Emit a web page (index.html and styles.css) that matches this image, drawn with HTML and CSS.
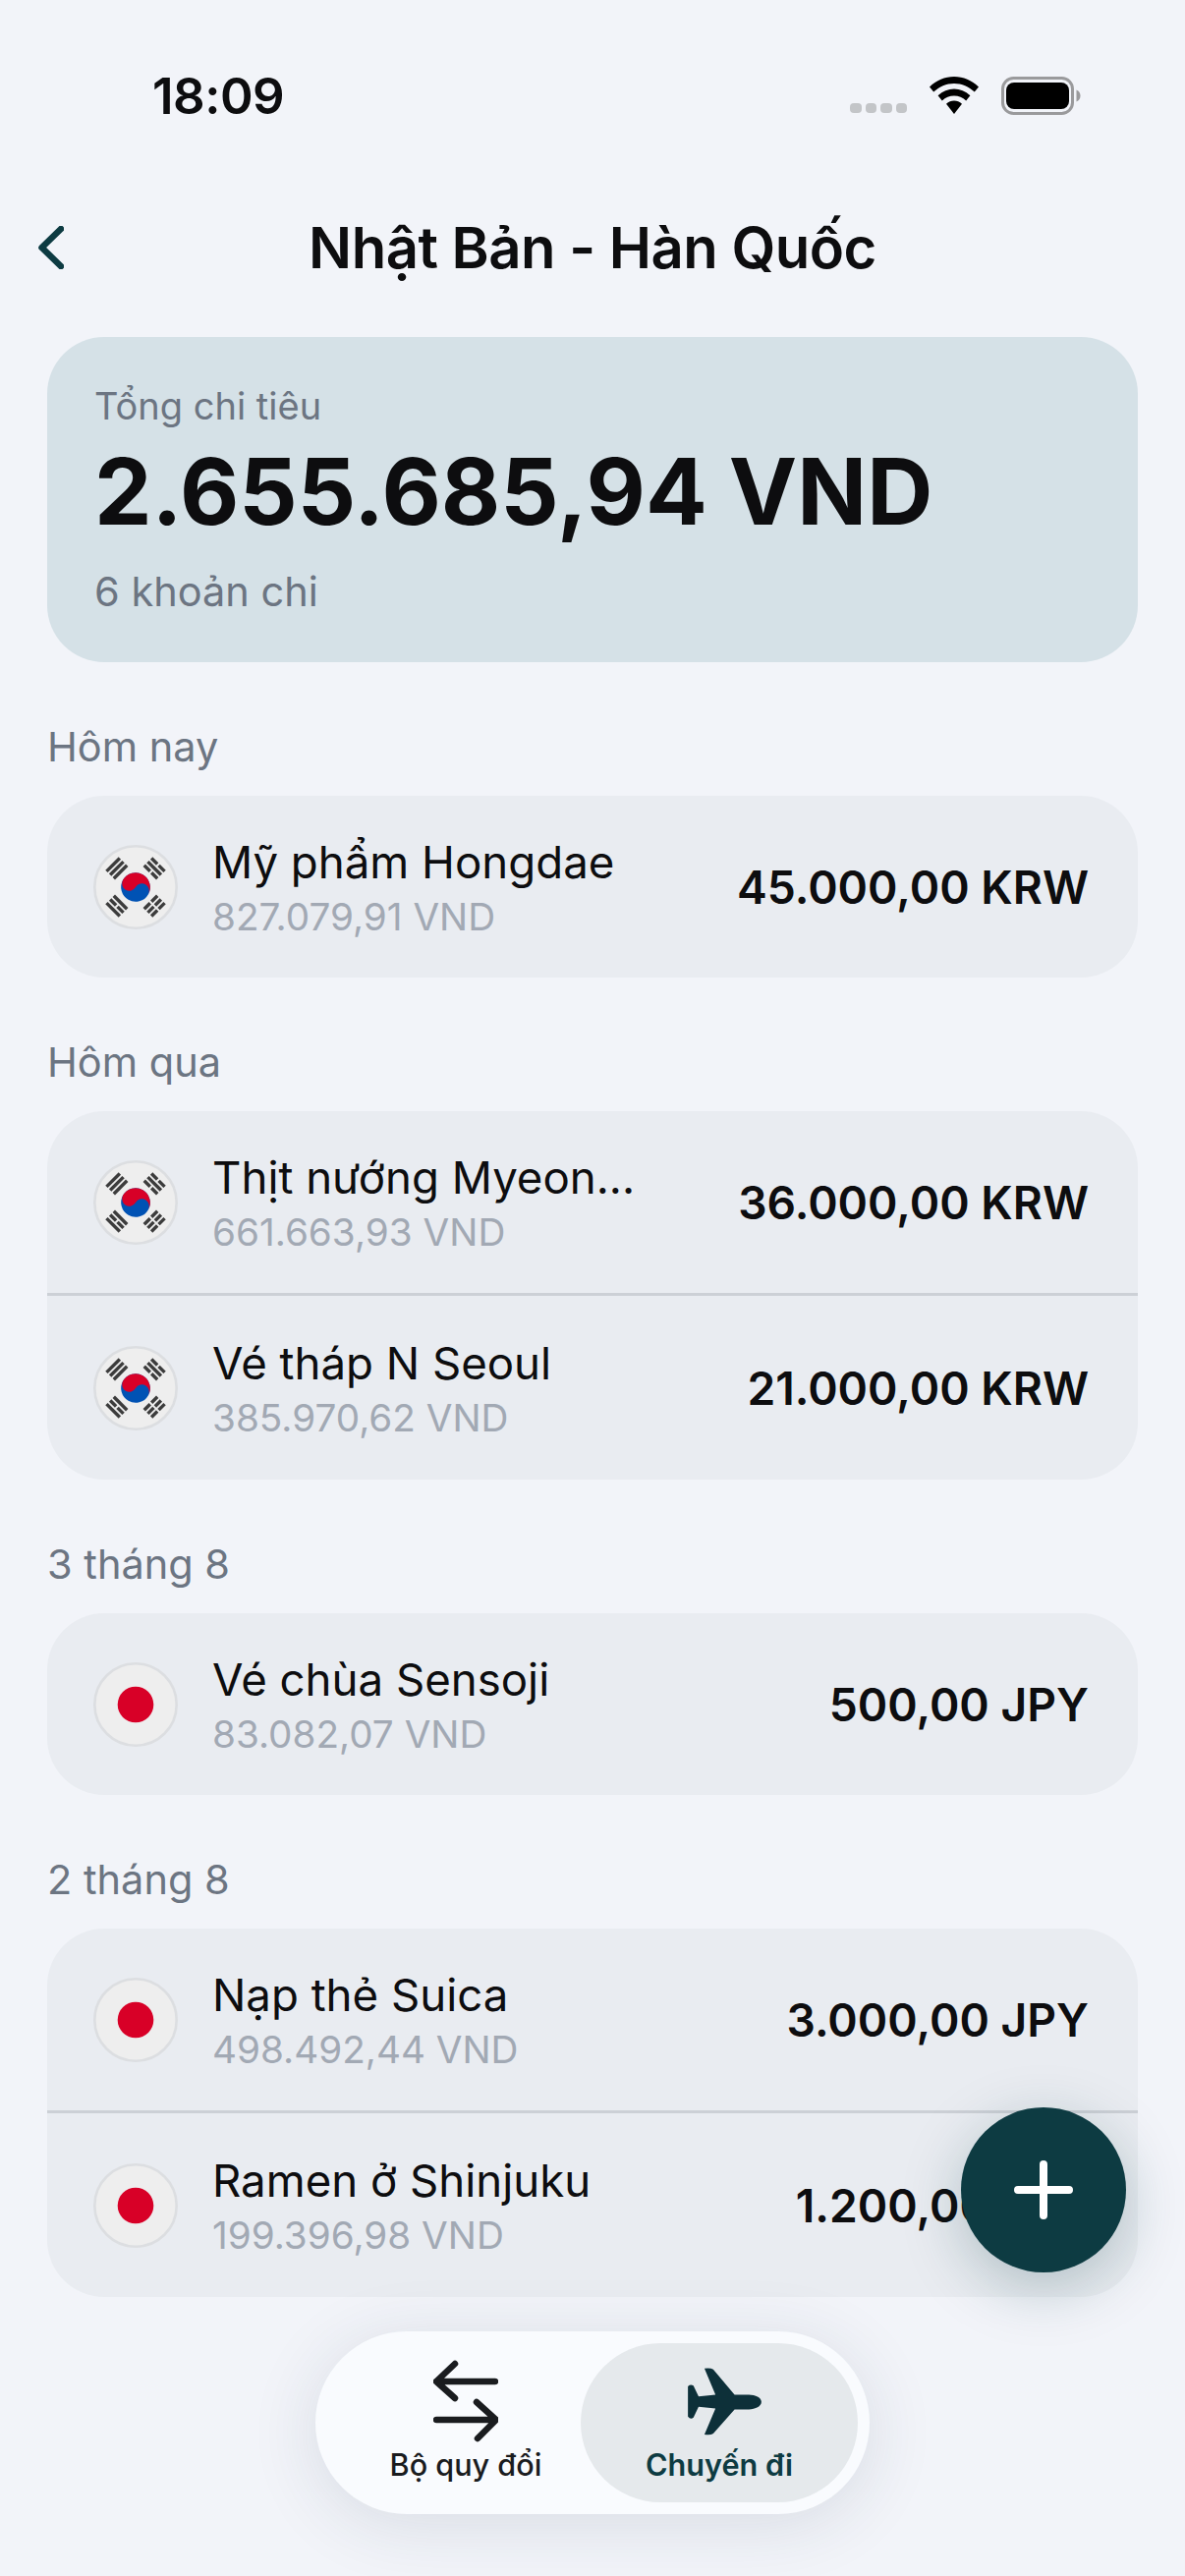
FILE: index.html
```html
<!DOCTYPE html>
<html lang="vi">
<head>
    <meta charset="UTF-8">
    <meta name="viewport" content="width=device-width, initial-scale=1.0">
    <title>Nhật Bản - Hàn Quốc</title>
    <link rel="stylesheet" href="styles.css">
</head>
<body>
    <svg class="defs" width="0" height="0">
        <defs>
            <symbol id="flag-kr" viewBox="0 0 86 86">
                <circle cx="43" cy="43" r="41.7" fill="#eeeeee" stroke="#dcdee1" stroke-width="2.6"/>
                <g fill="#3c3c3c">
                    <g transform="translate(43 43) rotate(-45)">
                        <rect x="-9.5" y="-34" width="19" height="3.4"/>
                        <rect x="-9.5" y="-28.8" width="19" height="3.4"/>
                        <rect x="-9.5" y="-23.6" width="19" height="3.4"/>
                    </g>
                    <g transform="translate(43 43) rotate(45)">
                        <rect x="-9.5" y="-34" width="8.5" height="3.4"/>
                        <rect x="1" y="-34" width="8.5" height="3.4"/>
                        <rect x="-9.5" y="-28.8" width="19" height="3.4"/>
                        <rect x="-9.5" y="-23.6" width="8.5" height="3.4"/>
                        <rect x="1" y="-23.6" width="8.5" height="3.4"/>
                    </g>
                    <g transform="translate(43 43) rotate(-135)">
                        <rect x="-9.5" y="-34" width="19" height="3.4"/>
                        <rect x="-9.5" y="-28.8" width="8.5" height="3.4"/>
                        <rect x="1" y="-28.8" width="8.5" height="3.4"/>
                        <rect x="-9.5" y="-23.6" width="19" height="3.4"/>
                    </g>
                    <g transform="translate(43 43) rotate(135)">
                        <rect x="-9.5" y="-34" width="8.5" height="3.4"/>
                        <rect x="1" y="-34" width="8.5" height="3.4"/>
                        <rect x="-9.5" y="-28.8" width="8.5" height="3.4"/>
                        <rect x="1" y="-28.8" width="8.5" height="3.4"/>
                        <rect x="-9.5" y="-23.6" width="8.5" height="3.4"/>
                        <rect x="1" y="-23.6" width="8.5" height="3.4"/>
                    </g>
                </g>
                <g transform="translate(43 43) rotate(30)">
                    <circle r="14.8" fill="#0052b4"/>
                    <path d="M-14.8 0A14.8 14.8 0 0 1 14.8 0A7.4 7.4 0 0 0 0 0A7.4 7.4 0 0 1 -14.8 0Z" fill="#d80027"/>
                </g>
            </symbol>
            <symbol id="flag-jp" viewBox="0 0 86 86">
                <circle cx="43" cy="43" r="41.7" fill="#eeeeee" stroke="#dcdee1" stroke-width="2.6"/>
                <circle cx="43" cy="43" r="18.3" fill="#d80027"/>
            </symbol>
        </defs>
    </svg>

    <div class="screen">
        <div class="status-bar">
            <span class="time">18:09</span>
            <div class="status-icons">
                <div class="signal"><i></i><i></i><i></i><i></i></div>
                <svg class="wifi" width="50" height="38" viewBox="0 0 50 38">
                    <path d="M25 0C15.500 0 7 3.800 0 10.400L4.200 15.600C10 10.200 17 7 25 7C33 7 40 10.200 45.800 15.600L50 10.400C43 3.800 34.500 0 25 0Z" fill="#000"/>
                    <path d="M25 12.500C19 12.500 13.500 14.800 8.600 19.300L12.800 24.500C16.300 21.300 20.300 19.500 25 19.500C29.700 19.500 33.700 21.300 37.200 24.500L41.400 19.300C36.500 14.800 31 12.500 25 12.500Z" fill="#000"/>
                    <path d="M25 24.500C22 24.500 19.500 25.500 17 27.700L25 38L33 27.700C30.500 25.500 28 24.500 25 24.500Z" fill="#000"/>
                </svg>
                <svg class="battery" width="81" height="39" viewBox="0 0 81 39">
                    <rect x="1.500" y="1.500" width="71" height="36" rx="11" fill="none" stroke="#9a9a9c" stroke-width="3"/>
                    <rect x="5" y="6" width="64" height="27" rx="8" fill="#000"/>
                    <path d="M76.500 13.500C79 14.500 80.500 16.800 80.500 19.500C80.500 22.200 79 24.500 76.500 25.500Z" fill="#9a9a9c"/>
                </svg>
            </div>
        </div>

        <div class="title-bar">
            <svg class="back" width="26" height="44" viewBox="0 0 26 44">
                <path d="M23 3L3.500 22L23 41" fill="none" stroke="#0d3b42" stroke-width="6.500" stroke-linecap="round" stroke-linejoin="round"/>
            </svg>
            <h1>Nhật Bản - Hàn Quốc</h1>
        </div>

        <div class="summary">
            <div class="summary-label">Tổng chi tiêu</div>
            <div class="summary-total">2.655.685,94 VND</div>
            <div class="summary-count">6 khoản chi</div>
        </div>

        <div class="day-label">Hôm nay</div>
        <div class="group">
            <div class="item">
                <svg class="flag"><use href="#flag-kr"/></svg>
                <div class="item-text">
                    <div class="item-name">Mỹ phẩm Hongdae</div>
                    <div class="item-sub">827.079,91 VND</div>
                </div>
                <div class="item-amount">45.000,00 KRW</div>
            </div>
        </div>

        <div class="day-label">Hôm qua</div>
        <div class="group">
            <div class="item">
                <svg class="flag"><use href="#flag-kr"/></svg>
                <div class="item-text">
                    <div class="item-name">Thịt nướng Myeon...</div>
                    <div class="item-sub">661.663,93 VND</div>
                </div>
                <div class="item-amount">36.000,00 KRW</div>
            </div>
            <div class="item">
                <svg class="flag"><use href="#flag-kr"/></svg>
                <div class="item-text">
                    <div class="item-name">Vé tháp N Seoul</div>
                    <div class="item-sub">385.970,62 VND</div>
                </div>
                <div class="item-amount">21.000,00 KRW</div>
            </div>
        </div>

        <div class="day-label">3 tháng 8</div>
        <div class="group">
            <div class="item">
                <svg class="flag"><use href="#flag-jp"/></svg>
                <div class="item-text">
                    <div class="item-name">Vé chùa Sensoji</div>
                    <div class="item-sub">83.082,07 VND</div>
                </div>
                <div class="item-amount">500,00 JPY</div>
            </div>
        </div>

        <div class="day-label">2 tháng 8</div>
        <div class="group">
            <div class="item">
                <svg class="flag"><use href="#flag-jp"/></svg>
                <div class="item-text">
                    <div class="item-name">Nạp thẻ Suica</div>
                    <div class="item-sub">498.492,44 VND</div>
                </div>
                <div class="item-amount">3.000,00 JPY</div>
            </div>
            <div class="item">
                <svg class="flag"><use href="#flag-jp"/></svg>
                <div class="item-text">
                    <div class="item-name">Ramen ở Shinjuku</div>
                    <div class="item-sub">199.396,98 VND</div>
                </div>
                <div class="item-amount">1.200,00 JPY</div>
            </div>
        </div>

        <div class="fab">
            <svg width="60" height="60" viewBox="0 0 60 60">
                <path d="M30 4V56M4 30H56" stroke="#fff" stroke-width="8" stroke-linecap="round"/>
            </svg>
        </div>

        <div class="tabbar">
            <div class="tab">
                <svg width="66" height="84" viewBox="0 0 66 84">
                    <path d="M63 22H3M22 4L3 22L22 39M3 61H64M44 43L64 61L45 80" fill="none" stroke="#1a1c1f" stroke-width="6.500" stroke-linecap="round" stroke-linejoin="round"/>
                </svg>
                <span>Bộ quy đổi</span>
            </div>
            <div class="tab tab-active">
                <svg class="plane" width="77" height="69" viewBox="1040 150 206 208" preserveAspectRatio="none">
                    <path d="M1243 255C1243 240 1225 233 1205 233L1170 233L1112 155Q1105 150 1088 152L1118 233L1072 238L1058 205Q1050 200 1043 207L1043 300Q1050 310 1058 303L1072 270L1118 275L1088 355Q1105 358 1112 352L1170 278L1205 278C1225 278 1243 270 1243 255Z" fill="#0d3039"/>
                </svg>
                <span>Chuyến đi</span>
            </div>
        </div>
    </div>
</body>
</html>
```

FILE: styles.css
```css
* {
    box-sizing: border-box;
}

body {
    margin: 0;
    background-color: #f2f4f9;
    font-family: Inter, "Noto Sans", sans-serif;
    color: #0d0d0f;
}

.defs {
    position: absolute;
}

.screen {
    position: relative;
    width: 1206px;
    height: 2622px;
    padding: 0 48px;
    overflow: hidden;
}

.status-bar {
    display: flex;
    justify-content: space-between;
    align-items: center;
    height: 194px;
    margin: 0 -48px;
    padding: 0 106px 0 155px;
}

.time {
    font-size: 51px;
    font-weight: 600;
    letter-spacing: -0.5px;
}

.status-icons {
    display: flex;
    align-items: center;
    gap: 23px;
}

.signal {
    display: flex;
    gap: 4px;
    align-self: flex-end;
    margin-bottom: 2px;
}

.signal i {
    width: 11.5px;
    height: 10px;
    border-radius: 4px;
    background-color: #c3c5c8;
}

.title-bar {
    position: relative;
    display: flex;
    align-items: center;
    justify-content: center;
    height: 116px;
    margin-bottom: 33px;
}

.back {
    position: absolute;
    left: -9px;
    top: 36px;
}

h1 {
    margin: 0;
    font-size: 58px;
    font-weight: 600;
    letter-spacing: -0.5px;
}

.summary {
    height: 331px;
    padding: 46px 48px 0;
    border-radius: 58px;
    background-color: #d5e1e7;
}

.summary-label {
    font-size: 38px;
    line-height: 48px;
    color: #6c7582;
}

.summary-total {
    margin-top: 9px;
    font-size: 93px;
    line-height: 108px;
    font-weight: 700;
}

.summary-count {
    margin-top: 24px;
    font-size: 41.5px;
    line-height: 48px;
    color: #6c7582;
}

.day-label {
    margin-top: 62px;
    margin-bottom: 26px;
    font-size: 41.5px;
    line-height: 48px;
    color: #6c7582;
}

.group {
    border-radius: 58px;
    background-color: #e9ecf1;
}

.item {
    display: flex;
    align-items: center;
    height: 185px;
    padding: 0 50px 0 47px;
}

.item + .item {
    height: 190px;
    border-top: 3px solid #ccd0d6;
}

.flag {
    flex: none;
    width: 86px;
    height: 86px;
}

.item-text {
    flex: 1;
    min-width: 0;
    margin-left: 35px;
    padding-top: 2px;
}

.item-name {
    font-size: 45.6px;
    line-height: 54px;
    white-space: nowrap;
}

.item-sub {
    margin-top: 5px;
    font-size: 38.7px;
    line-height: 46px;
    color: #a2a9b4;
}

.item-amount {
    flex: none;
    font-size: 46.2px;
    font-weight: 600;
}

.fab {
    position: absolute;
    left: 978px;
    top: 2145px;
    display: flex;
    align-items: center;
    justify-content: center;
    width: 168px;
    height: 168px;
    border-radius: 50%;
    background-color: #0d3b42;
    box-shadow: 0 16px 60px rgba(13, 59, 66, 0.25);
}

.tabbar {
    position: absolute;
    left: 321px;
    top: 2373px;
    display: flex;
    justify-content: space-between;
    width: 564px;
    height: 186px;
    padding: 12px;
    border-radius: 93px;
    background-color: #f9fbfe;
    box-shadow: 0 10px 70px rgba(30, 50, 70, 0.12);
}

.tab {
    display: flex;
    flex-direction: column;
    align-items: center;
    justify-content: flex-end;
    width: 234px;
    height: 162px;
    margin-left: 24px;
    padding-bottom: 20px;
    font-size: 30.6px;
    font-weight: 500;
    color: #1a1c1f;
}

.tab svg {
    margin-bottom: 4px;
}

.tab .plane {
    margin-left: 10px;
    margin-bottom: 11px;
}

.tab-active {
    width: 282px;
    margin-left: 0;
    border-radius: 81px;
    background-color: #e5e9ec;
    font-weight: 600;
    color: #0d3b42;
}
```
